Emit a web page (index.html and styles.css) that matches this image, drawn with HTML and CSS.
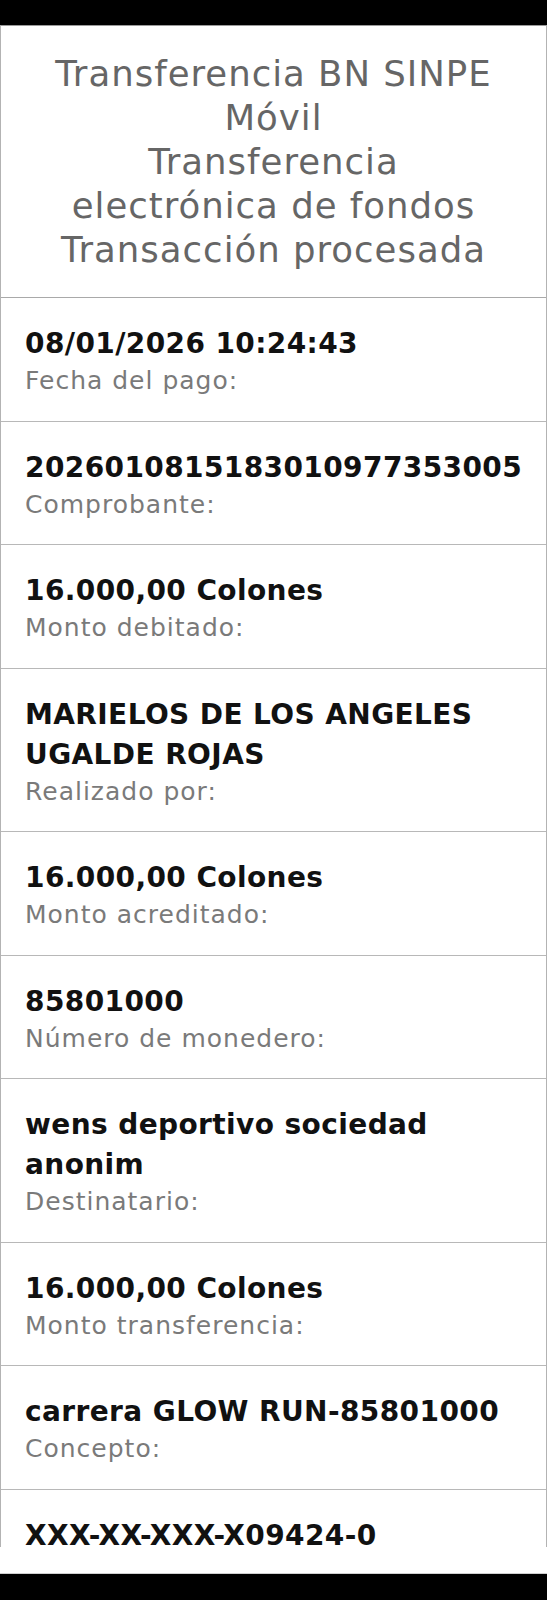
FILE: index.html
```html
<!DOCTYPE html>
<html lang="es">
<head>
<meta charset="utf-8">
<title>Transferencia BN SINPE Móvil</title>
<link rel="stylesheet" href="styles.css">
</head>
<body>
<div class="statusbar"></div>
<main class="receipt">
  <header class="receipt-head">
    <p class="head-text">Transferencia BN SINPE Móvil<br>Transferencia electrónica de fondos<br>Transacción procesada</p>
  </header>
  <ul class="fields">
    <li class="field"><div class="value">08/01/2026 10:24:43</div><div class="label">Fecha del pago:</div></li>
    <li class="field"><div class="value">2026010815183010977353005</div><div class="label">Comprobante:</div></li>
    <li class="field"><div class="value">16.000,00 Colones</div><div class="label">Monto debitado:</div></li>
    <li class="field"><div class="value">MARIELOS DE LOS ANGELES UGALDE ROJAS</div><div class="label">Realizado por:</div></li>
    <li class="field"><div class="value">16.000,00 Colones</div><div class="label">Monto acreditado:</div></li>
    <li class="field"><div class="value">85801000</div><div class="label">Número de monedero:</div></li>
    <li class="field"><div class="value">wens deportivo sociedad anonim</div><div class="label">Destinatario:</div></li>
    <li class="field"><div class="value">16.000,00 Colones</div><div class="label">Monto transferencia:</div></li>
    <li class="field"><div class="value">carrera GLOW RUN-85801000</div><div class="label">Concepto:</div></li>
    <li class="field"><div class="value">XXX-XX-XXX-X09424-0</div></li>
  </ul>
</main>
<div class="bottom-gap"></div>
<div class="navbar"></div>
</body>
</html>
```
FILE: styles.css
```css
* { box-sizing: border-box; }
html, body {
  margin: 0;
  padding: 0;
  background: #ffffff;
}
body {
  width: 547px;
  font-family: "DejaVu Sans", "Liberation Sans", sans-serif;
}
.statusbar {
  height: 25px;
  background: #000;
}
.receipt {
  height: 1522px;
  overflow: hidden;
  border-top: 1px solid #9a9a9a;
  border-left: 1px solid #b3b3b3;
  border-right: 1px solid #b3b3b3;
  background: #fff;
}
.receipt-head {
  border-bottom: 1px solid #a9a9a9;
  padding: 26px 42px 25px;
}
.head-text {
  margin: 0;
  text-align: center;
  font-size: 35.5px;
  line-height: 44px;
  letter-spacing: 1px;
  color: #666666;
  font-weight: 400;
}
.fields {
  list-style: none;
  margin: 0;
  padding: 0;
}
.field {
  padding: 26px 24px 23.5px 24px;
  border-bottom: 1px solid #b8b8b8;
}
.value {
  font-size: 28px;
  line-height: 40px;
  font-weight: 700;
  letter-spacing: 0.4px;
  color: #111111;
}
.label {
  font-size: 25px;
  line-height: 33px;
  letter-spacing: 1px;
  color: #7a7a7a;
}
.bottom-gap {
  height: 27px;
  background: #fff;
  border-bottom: 1px solid #cfcfcf;
}
.navbar {
  height: 26px;
  background: #000;
}
```
